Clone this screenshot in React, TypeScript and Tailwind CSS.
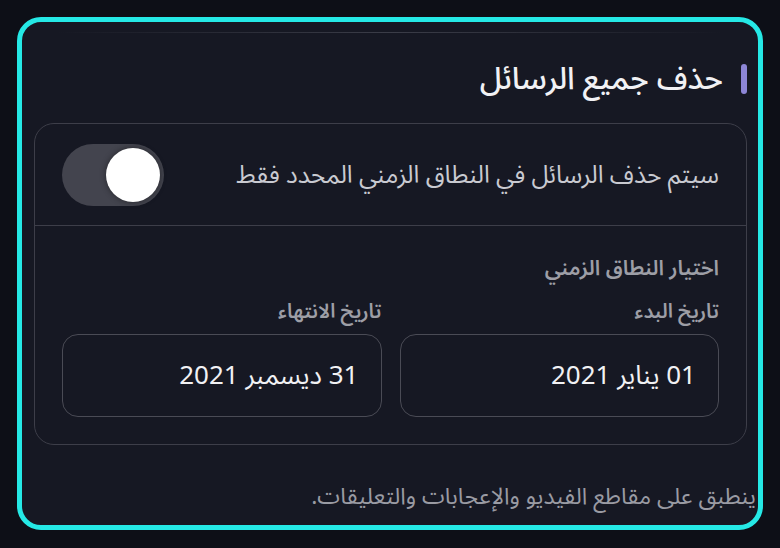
import React from 'react';

const FONT = "font-['Noto_Sans_Arabic','DejaVu_Sans',sans-serif]";

interface DateFieldProps {
  label: string;
  value: string;
}

const DateField: React.FC<DateFieldProps> = ({ label, value }) => (
  <div className="flex flex-1 flex-col">
    <span className="text-[20px] font-semibold leading-[20px] text-[#9d9ea6]">{label}</span>
    <div className="mt-[12px] flex h-[83px] items-center rounded-[16px] border border-[#4a4b55] px-[22px]">
      <span className="text-[26px] leading-[30px] text-[#f1f1f4]">{value}</span>
    </div>
  </div>
);

export default function App() {
  const [enabled, setEnabled] = React.useState(true);

  return (
    <div dir="rtl" className={`h-[548px] w-[780px] bg-[#0d0f17] pt-[17px] ${FONT}`}>
      <div className="mx-[17px] flex h-[513px] flex-col overflow-hidden rounded-[24px] border-[5px] border-[#25e9e6] bg-[#161823]">
        {/* faint divider at the top */}
        <div className="mx-[35px] mt-[10px] h-px bg-gradient-to-r from-transparent via-[#3b3d48] to-transparent" />

        {/* section title */}
        <div className="mt-[30px] flex items-center gap-[18px] pr-[11px]">
          <span className="h-[30px] w-[6px] rounded-full bg-[#8d86d6]" />
          <h2 className="text-[31px] font-medium leading-[32px] text-[#f1f1f4]">حذف جميع الرسائل</h2>
        </div>

        {/* settings card */}
        <div className="ml-[12px] mr-[11px] mt-[28px] rounded-[20px] border border-[#3d3e49]">
          <div className="flex h-[101px] items-center justify-between px-[27px]">
            <span className="text-[24.5px] leading-[28px] text-[#c9cad1]">سيتم حذف الرسائل في النطاق الزمني المحدد فقط</span>
            <button
              onClick={() => setEnabled(!enabled)}
              className={`flex h-[62px] w-[102px] items-center rounded-full p-[4px] ${
                enabled ? 'justify-start bg-[#43444e]' : 'justify-end bg-[#2a2b34]'
              }`}
            >
              <span className="h-[54px] w-[54px] rounded-full bg-white shadow-[0_0_6px_rgba(0,0,0,0.45)]" />
            </button>
          </div>
          <div className="h-px bg-[#3d3e49]" />
          <div className="px-[27px] pb-[27px] pt-[32px]">
            <p className="text-[21px] font-semibold leading-[20px] text-[#9d9ea6]">اختيار النطاق الزمني</p>
            <div className="mt-[24px] flex gap-[18px]">
              <DateField label="تاريخ البدء" value="01 يناير 2021" />
              <DateField label="تاريخ الانتهاء" value="31 ديسمبر 2021" />
            </div>
          </div>
        </div>

        <p className="mr-[2px] mt-[38px] text-[23px] leading-[27px] text-[#9a9ba3]">ينطبق على مقاطع الفيديو والإعجابات والتعليقات.</p>
      </div>
    </div>
  );
}
